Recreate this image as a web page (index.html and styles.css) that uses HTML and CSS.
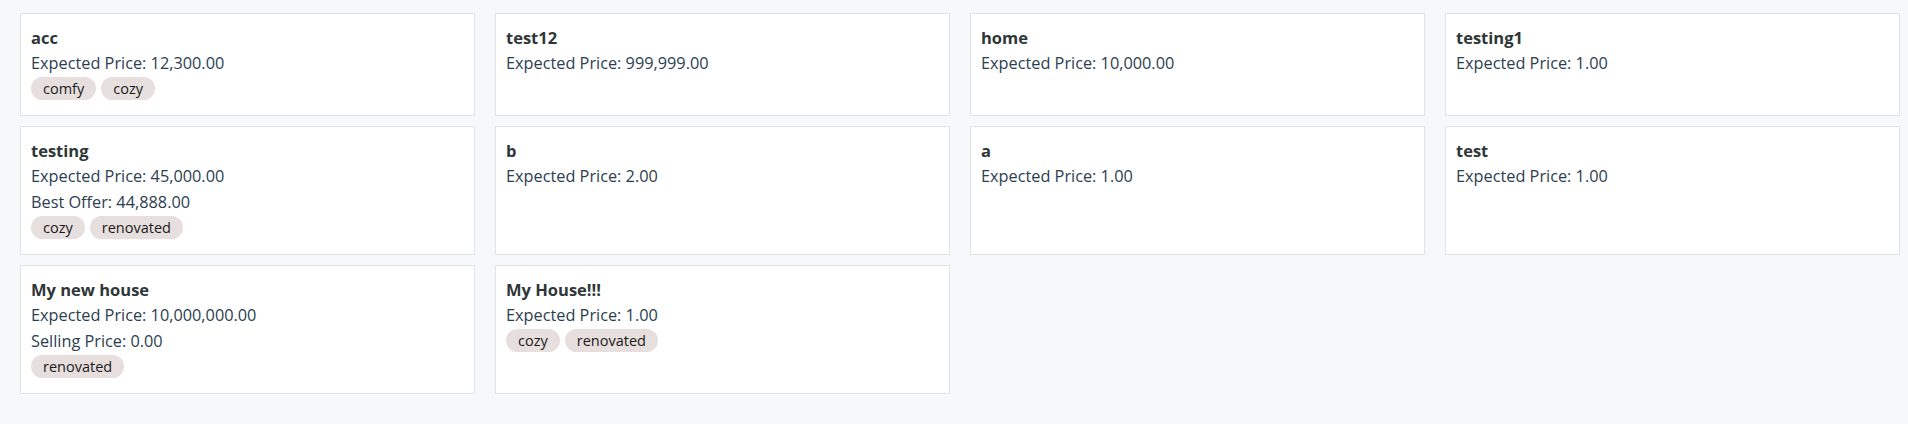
FILE: index.html
```html
<!DOCTYPE html>
<html lang="en">
<head>
<meta charset="utf-8">
<title>Listings</title>
<link rel="stylesheet" href="styles.css">
</head>
<body>
<main class="grid">
  <div class="card">
    <div class="title">acc</div>
    <div class="line">Expected Price: 12,300.00</div>
    <div class="tags"><span class="tag">comfy</span><span class="tag">cozy</span></div>
  </div>
  <div class="card">
    <div class="title">test12</div>
    <div class="line">Expected Price: 999,999.00</div>
  </div>
  <div class="card">
    <div class="title">home</div>
    <div class="line">Expected Price: 10,000.00</div>
  </div>
  <div class="card">
    <div class="title">testing1</div>
    <div class="line">Expected Price: 1.00</div>
  </div>
  <div class="card">
    <div class="title">testing</div>
    <div class="line">Expected Price: 45,000.00</div>
    <div class="line extra">Best Offer: 44,888.00</div>
    <div class="tags"><span class="tag">cozy</span><span class="tag">renovated</span></div>
  </div>
  <div class="card">
    <div class="title">b</div>
    <div class="line">Expected Price: 2.00</div>
  </div>
  <div class="card">
    <div class="title">a</div>
    <div class="line">Expected Price: 1.00</div>
  </div>
  <div class="card">
    <div class="title">test</div>
    <div class="line">Expected Price: 1.00</div>
  </div>
  <div class="card">
    <div class="title">My new house</div>
    <div class="line">Expected Price: 10,000,000.00</div>
    <div class="line extra">Selling Price: 0.00</div>
    <div class="tags"><span class="tag">renovated</span></div>
  </div>
  <div class="card">
    <div class="title">My House!!!</div>
    <div class="line">Expected Price: 1.00</div>
    <div class="tags"><span class="tag">cozy</span><span class="tag">renovated</span></div>
  </div>
</main>
</body>
</html>
```
FILE: styles.css
```css
html, body {
  margin: 0;
  padding: 0;
  background: #f7f8fa;
}

body {
  font-family: "Open Sans", "Noto Sans", sans-serif;
  font-size: 16.3px;
  color: #2c3e50;
}

.grid {
  display: grid;
  grid-template-columns: repeat(4, 1fr);
  column-gap: 20px;
  row-gap: 10px;
  padding: 13px 8px 0 20px;
  align-items: stretch;
}

.card {
  background: #ffffff;
  border: 1px solid #dfe2e6;
  padding: 12px 10px 15px 10px;
}

.title {
  font-size: 16.5px;
  font-weight: 700;
  color: #2f3638;
  line-height: 24px;
  margin-bottom: 1px;
}

.line {
  line-height: 24px;
}

.line.extra {
  margin-top: 2px;
}

.tags {
  display: flex;
  gap: 5px;
  margin-top: 2px;
}

.tag {
  display: inline-flex;
  align-items: center;
  height: 23px;
  padding: 0 12px;
  border-radius: 12px;
  background: #e7dfde;
  color: #1a1a1a;
  font-size: 14.5px;
}
```
